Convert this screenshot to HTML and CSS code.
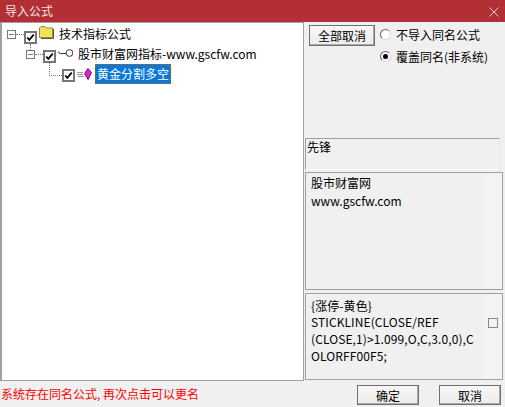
FILE: index.html
```html
<!DOCTYPE html>
<html lang="zh">
<head>
<meta charset="utf-8">
<title>导入公式</title>
<link rel="stylesheet" href="styles.css">
</head>
<body>
<div class="dialog">
  <header class="titlebar">
    <span class="title">导入公式</span>
    <svg class="close" width="10" height="10" viewBox="0 0 10 10"><path d="M0.5 0.5L9.5 9.5M9.5 0.5L0.5 9.5" stroke="#eacfd0" fill="none"/></svg>
  </header>
  <main class="content">
    <section class="tree">
      <div class="node level0">
        <span class="expander"></span><span class="dots-h"></span>
        <span class="check"><svg width="11" height="11" viewBox="0 0 11 11"><path d="M1.5 5.500L4 8.500L9.500 2" stroke="#000" stroke-width="2.2" fill="none"/></svg></span>
        <svg class="icon folder" width="15" height="13" viewBox="0 0 15 13"><path d="M0.500 11.500V2L2 0.500H6L7.500 2H13.500V11.500Z" fill="#f5e24e" stroke="#8a8a50"/><path d="M14.500 3V12.500H2" stroke="#555" fill="none"/></svg>
        <span class="label">技术指标公式</span>
      </div>
      <div class="node level1">
        <span class="vline"></span>
        <span class="expander"></span><span class="dots-h"></span>
        <span class="check"><svg width="11" height="11" viewBox="0 0 11 11"><path d="M1.5 5.500L4 8.500L9.500 2" stroke="#000" stroke-width="2.2" fill="none"/></svg></span>
        <svg class="icon" width="15" height="8" viewBox="0 0 15 8"><circle cx="11.500" cy="4" r="3.400" fill="#fff" stroke="#333"/><path d="M8 4.500H2.500Q0.500 4.500 0.500 2.500" stroke="#333" fill="none"/></svg>
        <span class="label">股市财富网指标-www.gscfw.com</span>
      </div>
      <div class="node level2">
        <span class="elbow"></span>
        <span class="check"><svg width="11" height="11" viewBox="0 0 11 11"><path d="M1.5 5.500L4 8.500L9.500 2" stroke="#000" stroke-width="2.2" fill="none"/></svg></span>
        <svg class="icon" width="15" height="12" viewBox="0 0 15 12"><path d="M0 4.500H6M0 6.500H6M1 8.500H7" stroke="#999" fill="none"/><path d="M11 0.500L14.500 4.500L11 11.500L7.500 5.500Z" fill="#f016e0" stroke="#502060"/></svg>
        <span class="label selected">黄金分割多空</span>
      </div>
    </section>
    <aside class="side">
      <div class="controls">
        <button class="btn all">全部取消</button>
        <div class="radios">
          <label class="radio"><span class="dot"></span>不导入同名公式</label>
          <label class="radio"><span class="dot on"></span>覆盖同名(非系统)</label>
        </div>
      </div>
      <div class="panel group">先锋</div>
      <div class="panel info">股市财富网<br>www.gscfw.com</div>
      <div class="panel code">
        <div class="code-text">
          <div class="line">{涨停-黄色}</div>
          <div class="line">STICKLINE(CLOSE/REF</div>
          <div class="line">(CLOSE,1)&gt;1.099,O,C,3.0,0),C</div>
          <div class="line">OLORFF00F5;</div>
        </div>
        <span class="box"></span>
      </div>
    </aside>
  </main>
  <footer class="footer">
    <span class="msg">系统存在同名公式, 再次点击可以更名</span>
    <button class="btn act ok">确定</button>
    <button class="btn act">取消</button>
  </footer>
</div>
</body>
</html>
```
FILE: styles.css
```css
* { box-sizing: border-box; }
html, body { margin: 0; padding: 0; }
body { width: 505px; height: 407px; overflow: hidden; background: #f0f0f0; font-family: "Noto Sans CJK SC", "Noto Sans", sans-serif; font-size: 12px; color: #000; }
.dialog { width: 505px; height: 407px; display: flex; flex-direction: column; }
.titlebar { height: 22px; background: #b23035; color: #f3e4e4; display: flex; align-items: center; justify-content: space-between; padding: 0 6px 0 5px; flex: none; }
.title { font-size: 12px; line-height: 16px; }
.close { margin-top: 1px; }
.content { height: 359px; display: flex; flex: none; }
.tree { width: 304px; height: 359px; background: #fff; border-left: 2px solid #a0a0a0; border-top: 1px solid #a0a0a0; border-bottom: 1px solid #a0a0a0; border-right: 1px solid #a0a0a0; padding: 0 0 0 5px; flex: none; }
.node { height: 20px; display: flex; align-items: center; position: relative; }
.level1 { margin-left: 19px; }
.level2 { margin-left: 55px; margin-top: 1px; }
.expander { width: 9px; height: 9px; border: 1px solid #777; background: linear-gradient(#777,#777) center/5px 1px no-repeat #fff; flex: none; margin-top: 2px; }
.dots-h { width: 8px; border-top: 1px dotted #777; flex: none; margin-top: 2px; }
.check { width: 13px; height: 13px; border: 2px solid #777; background: #fff; display: flex; align-items: center; justify-content: center; flex: none; }
.level0 .check { margin-top: 8px; }
.level1 .check { margin-top: 6px; }
.level2 .check { margin-top: 3px; }
.icon { margin-left: 2px; flex: none; }
.folder { margin-bottom: 2px; }
.label { margin-left: 5px; line-height: 17px; white-space: nowrap; font-size: 12px; }
.selected { margin-left: 3px; background: #0a78d7; color: #fff; border: 1px dotted #c06000; padding: 0 1px; line-height: 18px; }
.vline { position: absolute; left: 4px; top: 1px; height: 6px; border-left: 1px dotted #777; }
.elbow { position: absolute; left: -13px; top: -1px; width: 13px; height: 13px; border-left: 1px dotted #777; border-bottom: 1px dotted #777; }
.side { flex: 1; display: flex; flex-direction: column; padding: 3px 2px 0 2px; }
.controls { height: 113px; display: flex; align-items: flex-start; gap: 5px; padding-left: 3px; flex: none; }
.btn { font: inherit; font-size: 12px; color: #000; background: linear-gradient(#f7f7f7,#ececec); border: 1px solid #707070; padding: 0; box-shadow: inset -1px -1px 0 #aaa; }
.all { width: 66px; height: 21px; }
.radios { display: flex; flex-direction: column; gap: 4px; }
.radio { display: flex; align-items: center; gap: 5px; height: 17px; white-space: nowrap; font-size: 12px; margin-top: 1px; }
.dot { width: 11px; height: 11px; border-radius: 50%; border: 1px solid; border-color: #666 #ddd #ddd #666; background: #fff; flex: none; position: relative; }
.dot.on { background: #f4f4f4; }
.dot.on::after { content: ""; position: absolute; left: 2px; top: 2px; width: 5px; height: 5px; border-radius: 50%; background: #000; }
.panel { border: 1px solid #a0a0a0; flex: none; margin-left: -1px; }
.group { width: 195px; height: 32px; border-right-color: #e8e8e8; border-bottom: 1px solid #fff; line-height: 16px; padding: 0 0 0 1px; }
.info { width: 198px; height: 118px; margin-top: 2px; padding: 1px 0 0 5px; line-height: 18px; background: linear-gradient(90deg,#f0f0f0 178px,#f4f3f1 178px); }
.code { width: 198px; height: 87px; margin-top: 3px; padding: 5px 0 0 5px; display: flex; background: linear-gradient(90deg,#f0f0f0 176px,#f4f3f1 176px); }
.code-text { width: 175px; white-space: nowrap; letter-spacing: 0.1px; }
.line { height: 17px; line-height: 17px; }
.line:first-child { height: 14px; line-height: 14px; }
.box { width: 10px; height: 10px; border: 1px solid #888; background: #f4f4f4; margin: 19px 0 0 2px; flex: none; }
.footer { flex: 1; display: flex; align-items: center; padding: 0 4px 0 1px; }
.msg { color: #f00; font-size: 12px; flex: 1; white-space: nowrap; margin-top: -1px; }
.act { width: 62px; height: 20px; margin-top: 2px; }
.ok { margin-right: 20px; }
```
